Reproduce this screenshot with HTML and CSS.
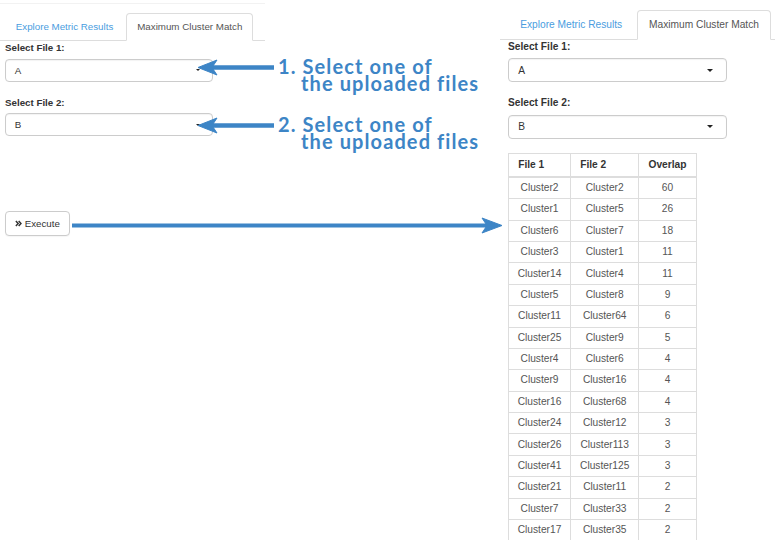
FILE: index.html
```html
<!DOCTYPE html>
<html lang="en">
<head>
<meta charset="utf-8">
<title>Maximum Cluster Match</title>
<link rel="stylesheet" href="styles.css">
</head>
<body>
<div class="page">
  <section class="panel panel-left">
    <ul class="tabs">
      <li class="tab">Explore Metric Results</li>
      <li class="tab tab-active">Maximum Cluster Match</li>
    </ul>
    <div class="group">
      <label class="label">Select File 1:</label>
      <div class="select"><span>A</span><span class="caret"></span></div>
    </div>
    <div class="group">
      <label class="label">Select File 2:</label>
      <div class="select"><span>B</span><span class="caret"></span></div>
    </div>
    <button class="btn" type="button">
      <svg class="btn-icon" viewBox="0 0 8 8" width="7" height="7"><path d="M1 1.2 L3.6 4 L1 6.8 M4.2 1.2 L6.8 4 L4.2 6.8" fill="none" stroke="#333" stroke-width="1.7"/></svg>
      <span>Execute</span>
    </button>
  </section>

  <section class="panel panel-right">
    <ul class="tabs">
      <li class="tab">Explore Metric Results</li>
      <li class="tab tab-active">Maximum Cluster Match</li>
    </ul>
    <div class="group">
      <label class="label">Select File 1:</label>
      <div class="select"><span>A</span><span class="caret"></span></div>
    </div>
    <div class="group">
      <label class="label">Select File 2:</label>
      <div class="select"><span>B</span><span class="caret"></span></div>
    </div>
    <table class="results">
      <colgroup><col class="c1"><col class="c2"><col class="c3"></colgroup>
      <thead>
        <tr><th>File 1</th><th>File 2</th><th>Overlap</th></tr>
      </thead>
      <tbody>
        <tr><td>Cluster2</td><td>Cluster2</td><td>60</td></tr>
        <tr><td>Cluster1</td><td>Cluster5</td><td>26</td></tr>
        <tr><td>Cluster6</td><td>Cluster7</td><td>18</td></tr>
        <tr><td>Cluster3</td><td>Cluster1</td><td>11</td></tr>
        <tr><td>Cluster14</td><td>Cluster4</td><td>11</td></tr>
        <tr><td>Cluster5</td><td>Cluster8</td><td>9</td></tr>
        <tr><td>Cluster11</td><td>Cluster64</td><td>6</td></tr>
        <tr><td>Cluster25</td><td>Cluster9</td><td>5</td></tr>
        <tr><td>Cluster4</td><td>Cluster6</td><td>4</td></tr>
        <tr><td>Cluster9</td><td>Cluster16</td><td>4</td></tr>
        <tr><td>Cluster16</td><td>Cluster68</td><td>4</td></tr>
        <tr><td>Cluster24</td><td>Cluster12</td><td>3</td></tr>
        <tr><td>Cluster26</td><td>Cluster113</td><td>3</td></tr>
        <tr><td>Cluster41</td><td>Cluster125</td><td>3</td></tr>
        <tr><td>Cluster21</td><td>Cluster11</td><td>2</td></tr>
        <tr><td>Cluster7</td><td>Cluster33</td><td>2</td></tr>
        <tr><td>Cluster17</td><td>Cluster35</td><td>2</td></tr>
      </tbody>
    </table>
  </section>

  <div class="note note-1"><span class="note-line">1. Select one of</span><span class="note-line note-indent">the uploaded files</span></div>
  <div class="note note-2"><span class="note-line">2. Select one of</span><span class="note-line note-indent">the uploaded files</span></div>

  <svg class="arrows" viewBox="0 0 775 540" width="775" height="540">
    <g fill="#3d85c6" stroke="#3d85c6">
      <line x1="274" y1="67.5" x2="211" y2="67.5" stroke-width="4.5"/>
      <polygon points="198,67.5 217,60 212,67.5 217,75" stroke-width="1"/>
      <line x1="274" y1="125.5" x2="211" y2="125.5" stroke-width="4.5"/>
      <polygon points="198,125.5 217,118 212,125.5 217,133" stroke-width="1"/>
      <line x1="72" y1="225.5" x2="490" y2="225.5" stroke-width="4"/>
      <polygon points="502,225.5 482,218 487,225.5 482,233" stroke-width="1"/>
    </g>
  </svg>
</div>
</body>
</html>
```
FILE: styles.css
```css
* { box-sizing: border-box; }

html, body {
  margin: 0;
  padding: 0;
  background: #fff;
}

body {
  font-family: "Liberation Sans", Arial, sans-serif;
  color: #333;
  overflow: hidden;
}

.page {
  position: relative;
  width: 775px;
  height: 540px;
  display: flex;
  justify-content: space-between;
  align-items: flex-start;
}

.panel {
  display: flex;
  flex-direction: column;
  align-items: flex-start;
}

.panel-left {
  width: 265px;
  font-size: 9.75px;
  padding: 9px 0 0 5px;
  margin-top: 3px;
  border-top: 1px solid #f2f2f2;
}

.panel-right {
  width: 275px;
  font-size: 10.2px;
  padding: 10px 0 0 8px;
}

.tabs {
  list-style: none;
  margin: 0;
  padding: 0;
  display: flex;
  align-self: stretch;
  border-bottom: 1px solid #ddd;
}

.panel-left .tabs { margin-left: -5px; padding-left: 5px; }
.panel-right .tabs { margin-left: -8px; padding-left: 8px; }

.tab {
  padding: 0 1.1em;
  line-height: 2.7em;
  border: 1px solid transparent;
  border-radius: 4px 4px 0 0;
  margin-right: 0.25em;
  margin-bottom: -1px;
  color: #4a9de0;
  white-space: nowrap;
}

.panel-left .tab { padding: 0 1em; }

.tab-active {
  color: #555;
  background: #fff;
  border-color: #ddd #ddd transparent #ddd;
}

.group {
  margin-bottom: 1.4em;
}

.label {
  display: block;
  font-weight: bold;
  line-height: 1.4em;
  margin-bottom: 0.4em;
  color: #333;
}

.select {
  width: 21.3em;
  height: 2.38em;
  border: 1px solid #ccc;
  border-radius: 4px;
  display: flex;
  align-items: center;
  justify-content: space-between;
  padding: 0 1.3em 0 0.9em;
  color: #333;
  background: #fff;
  box-shadow: inset 0 1px 1px rgba(0, 0, 0, 0.05);
}

.panel-right .select { width: 21.5em; }

.caret {
  width: 0;
  height: 0;
  border-top: 0.32em solid #222;
  border-left: 0.32em solid transparent;
  border-right: 0.32em solid transparent;
}

.panel-left .caret {
  border-top-width: 0.28em;
  border-left-width: 0.28em;
  border-right-width: 0.28em;
  margin-right: -0.15em;
}

.btn {
  margin-top: 6.2em;
  height: 2.56em;
  padding: 0 0.9em;
  font: inherit;
  color: #333;
  background: #fff;
  border: 1px solid #ccc;
  border-radius: 4px;
  display: inline-flex;
  align-items: center;
  gap: 0.3em;
  box-shadow: 0 1px 1px rgba(0, 0, 0, 0.04);
}

.btn-icon { display: block; }

.results {
  border-collapse: collapse;
  table-layout: fixed;
  width: 18.4em;
}

.results .c1 { width: 6.08em; }
.results .c2 { width: 6.7em; }
.results .c3 { width: 5.62em; }

.results th,
.results td {
  border: 1px solid #ddd;
  line-height: 1.4em;
  white-space: nowrap;
}

.results th {
  text-align: left;
  font-weight: bold;
  color: #333;
  padding: 0.36em 0.9em;
  border-bottom-width: 2px;
}

.results td {
  text-align: center;
  color: #555;
  padding: 0.3em 0.2em;
}

.note {
  position: absolute;
  font-family: "Lato", "Open Sans", sans-serif;
  font-weight: 700;
  font-size: 20px;
  line-height: 17px;
  letter-spacing: 1.1px;
  color: #3d85c6;
  white-space: nowrap;
}

.note-1 { left: 278px; top: 58px; }
.note-2 { left: 278px; top: 116px; }

.note-line { display: block; }
.note-indent { padding-left: 23px; }

.arrows {
  position: absolute;
  left: 0;
  top: 0;
  pointer-events: none;
}
```
